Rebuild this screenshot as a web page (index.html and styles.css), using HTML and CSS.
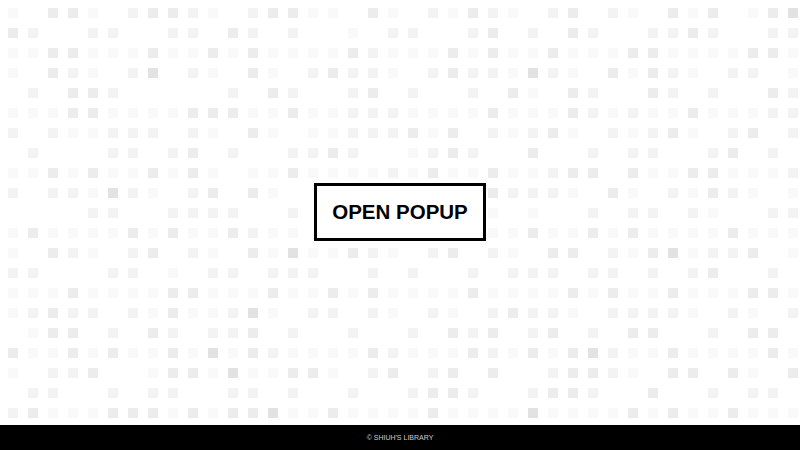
FILE: index.html
```html
<!DOCTYPE html>
<html lang="en">
<head>
<meta charset="utf-8">
<title>Open Popup</title>
<link rel="stylesheet" href="styles.css">
</head>
<body>
<main class="stage">
  <div class="tiles" id="tiles"></div>
  <button class="open-btn" type="button">OPEN POPUP</button>
</main>
<footer class="footer">© SHIUH'S LIBRARY</footer>
<script src="script.js"></script>
</body>
</html>
```

FILE: styles.css
```css
* { box-sizing: border-box; }
html, body { margin: 0; padding: 0; }
body {
  width: 800px;
  height: 450px;
  overflow: hidden;
  background: #ffffff;
  font-family: "Liberation Sans", Arial, sans-serif;
  display: flex;
  flex-direction: column;
}
.stage {
  width: 800px;
  height: 425px;
  overflow: hidden;
  display: grid;
  grid-template-columns: minmax(0, 1fr);
  grid-template-rows: minmax(0, 1fr);
}
.tiles {
  grid-area: 1 / 1;
  display: grid;
  grid-template-columns: repeat(40, 10px);
  grid-auto-rows: 10px;
  gap: 10px;
  padding: 8px;
  align-content: start;
  min-width: 0;
  overflow: hidden;
}
.tile { width: 10px; height: 10px; }
.t0 { background: transparent; }
.t1 { background: #f9f9f9; }
.t2 { background: #f3f3f3; }
.t3 { background: #ececec; }
.t4 { background: #e2e2e2; }
.open-btn {
  grid-area: 1 / 1;
  place-self: center;
  width: 172px;
  height: 58px;
  border: 3px solid #000;
  background: #fff;
  color: #000;
  font-family: "Liberation Sans", Arial, sans-serif;
  font-weight: bold;
  font-size: 20.5px;
  padding: 0;
  margin-top: -1px;
  cursor: pointer;
}
.footer {
  height: 25px;
  background: #000;
  color: #cfcfcf;
  font-size: 7px;
  display: flex;
  align-items: center;
  justify-content: center;
}
```

FILE: script.js
```js
(function () {
  var rows = [
    "1.331.23321.23311.31" + ".21321.23.21.313.134",
    "32..22..22.32.2..1.2" + "2..23.2.32..2232..22",
    "11331113113131111321" + "11313113111331111331",
    "1.321.24.21.31.23221" + ".23221421.31321.22.1",
    ".2.332.....2.32..23." + "2..2.31.32..32.2..32",
    "11133111133311311222" + "11113111321211311122",
    "2.211222.21.31.11222" + "313.21231.21231.23.2",
    ".2...22.23.2..2232.." + "1232..3..2.22..23.2.",
    "11313113131.11311112" + "1311311233.311331112",
    "2.221421.23.31......" + "....32221.31.21321.1",
    "....22..2222..2....." + "....1.1..2.22.21..22",
    "131111313113211....." + "....1131131311113111",
    "1.321.23.21.31411321" + ".23.21.33.21341223.1",
    "22...22.1.22.222..2." + "2..2.222.22.2.23..2.",
    "11131111331113113131" + "11131111313113111331",
    "12322.21311241.22.21" + ".21.23221.22221.21.2",
    ".133.2.32.223.2..2.." + "2.323.23.2.33..2.33.",
    "31131311314132111132" + "11132131342113111131",
    "1.223..1331411331.23" + ".23.3..23321.33.31.3",
    ".22..2.22..22.2..2.." + "2332..2332..3..2.22.",
    "23111333131334113111" + "13111141111313113111"
  ];
  var box = document.getElementById("tiles");
  var frag = document.createDocumentFragment();
  rows.forEach(function (r) {
    for (var i = 0; i < 40; i++) {
      var ch = r.charAt(i);
      var d = document.createElement("div");
      d.className = "tile t" + (ch === "." || ch === "" ? "0" : ch);
      frag.appendChild(d);
    }
  });
  box.appendChild(frag);
})();
```
